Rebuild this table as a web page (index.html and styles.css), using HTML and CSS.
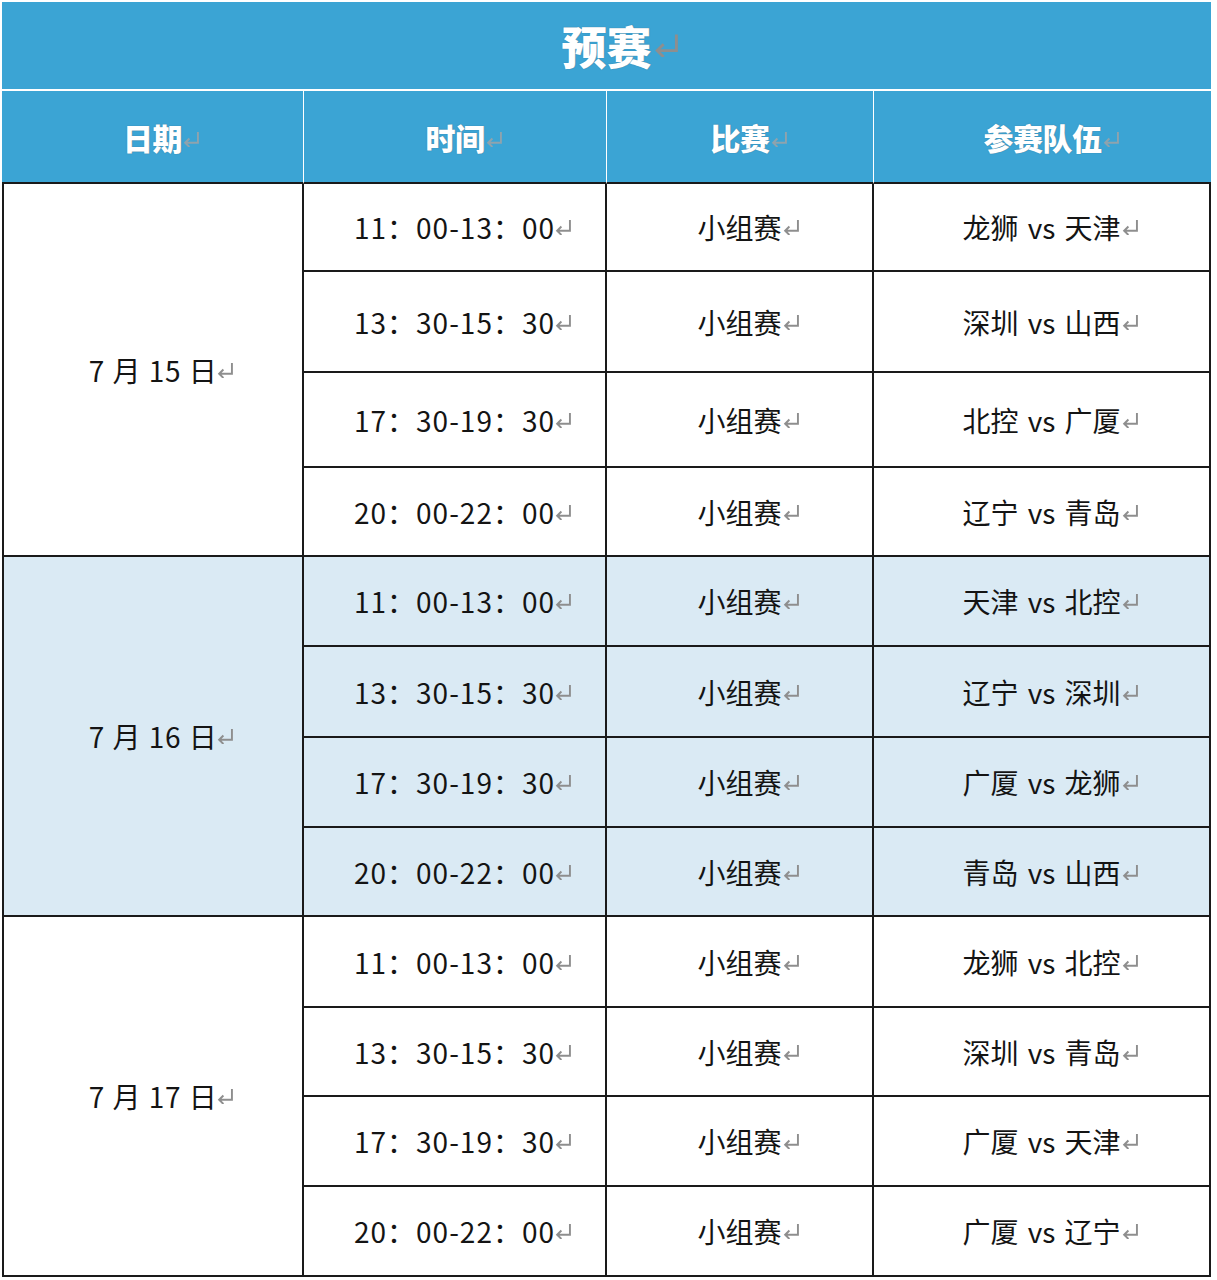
FILE: index.html
```html
<!DOCTYPE html>
<html lang="zh-CN">
<head>
<meta charset="utf-8">
<title>预赛</title>
<link rel="stylesheet" href="styles.css">
</head>
<body>
<table class="sched">
  <colgroup>
    <col class="c1"><col class="c2"><col class="c3"><col class="c4">
  </colgroup>
  <thead>
    <tr class="title-row"><th colspan="4" class="title"><span class="t">预赛<span class="ret"><svg viewBox="0 0 16 15"><path d="M14.5 1V11H2.5M6.5 7L2.5 11L6.5 15"/></svg></span></span></th></tr>
    <tr class="head-row">
      <th><span class="t">日期<span class="ret"><svg viewBox="0 0 16 15"><path d="M14.5 1V11H2.5M6.5 7L2.5 11L6.5 15"/></svg></span></span></th>
      <th><span class="t">时间<span class="ret"><svg viewBox="0 0 16 15"><path d="M14.5 1V11H2.5M6.5 7L2.5 11L6.5 15"/></svg></span></span></th>
      <th><span class="t">比赛<span class="ret"><svg viewBox="0 0 16 15"><path d="M14.5 1V11H2.5M6.5 7L2.5 11L6.5 15"/></svg></span></span></th>
      <th class="last"><span class="t">参赛队伍<span class="ret"><svg viewBox="0 0 16 15"><path d="M14.5 1V11H2.5M6.5 7L2.5 11L6.5 15"/></svg></span></span></th>
    </tr>
  </thead>
  <tbody id="body"></tbody>
</table>
<script src="app.js"></script>
</body>
</html>
```
FILE: styles.css
```css
html, body {
  margin: 0;
  padding: 0;
  background: #ffffff;
}
body {
  font-family: "Noto Sans CJK SC", "Noto Sans", sans-serif;
  color: #141414;
}
.sched {
  margin: 2px 0 0 2px;
  width: 1209px;
  table-layout: fixed;
  border-collapse: separate;
  border-spacing: 0;
}
.c1 { width: 302px; }
.c2 { width: 303px; }
.c3 { width: 267px; }
.c4 { width: 337px; }

th, td {
  padding: 0;
  text-align: center;
  vertical-align: middle;
}
.t {
  position: relative;
  display: inline-block;
}
.ret {
  position: absolute;
  left: 100%;
  top: 50%;
  width: 18px;
  height: 16px;
  margin-top: -8px;
}
.ret svg {
  display: block;
  width: 18px;
  height: 16px;
  fill: none;
  stroke: #8e8e8e;
  stroke-width: 1.8;
}
.title {
  background: #3ba4d4;
  height: 87px;
  border-bottom: 2px solid #ffffff;
  color: #ffffff;
  font-size: 45px;
  font-weight: 900;
  text-shadow: 0 0 1px rgba(60, 80, 100, 0.7);
}
.title .ret {
  width: 26px;
  height: 24px;
  margin-top: -13px;
  left: calc(100% + 1px);
}
.title .ret svg { width: 26px; height: 24px; }
.head-row th {
  background: #3ba4d4;
  height: 91px;
  border-right: 1px solid #ffffff;
  border-bottom: 2px solid #1a1a1a;
  color: #ffffff;
  font-size: 30px;
  font-weight: 900;
  letter-spacing: -0.5px;
  text-shadow: 0 0 1px rgba(60, 80, 100, 0.7);
}
.head-row th.last { border-right: 0; }
.head-row .ret { margin-top: -6px; }
.head-row .ret svg { stroke: #8fa3ad; }

td {
  border-right: 2px solid #1a1a1a;
  border-bottom: 2px solid #1a1a1a;
  font-size: 28px;
  line-height: 1;
}
td.date { border-left: 2px solid #1a1a1a; }
tr.alt td { background: #daeaf4; }
td.time .t { letter-spacing: 1px; }
td.date .t { word-spacing: 1px; letter-spacing: 0.5px; }
td.teams .t { word-spacing: 3px; }
td.time .ret, td.date .ret { margin-left: -1px; }
```
FILE: app.js
```js
var groups = [
  { date: "7 月 15 日", alt: false, games: [
    ["11：00-13：00", "龙狮 vs 天津"],
    ["13：30-15：30", "深圳 vs 山西"],
    ["17：30-19：30", "北控 vs 广厦"],
    ["20：00-22：00", "辽宁 vs 青岛"]
  ]},
  { date: "7 月 16 日", alt: true, games: [
    ["11：00-13：00", "天津 vs 北控"],
    ["13：30-15：30", "辽宁 vs 深圳"],
    ["17：30-19：30", "广厦 vs 龙狮"],
    ["20：00-22：00", "青岛 vs 山西"]
  ]},
  { date: "7 月 17 日", alt: false, games: [
    ["11：00-13：00", "龙狮 vs 北控"],
    ["13：30-15：30", "深圳 vs 青岛"],
    ["17：30-19：30", "广厦 vs 天津"],
    ["20：00-22：00", "广厦 vs 辽宁"]
  ]}
];
var heights = [88, 101, 95, 89, 90, 91, 90, 89, 91, 89, 90, 90];
var RET = '<span class="ret"><svg viewBox="0 0 16 15"><path d="M14.5 1V11H2.5M6.5 7L2.5 11L6.5 15"/></svg></span>';
function cell(text) { return '<span class="t">' + text + RET + '</span>'; }
var html = "";
var idx = 0;
groups.forEach(function (g) {
  g.games.forEach(function (gm, i) {
    var h = heights[idx++];
    html += '<tr' + (g.alt ? ' class="alt"' : '') + ' style="height:' + h + 'px">';
    if (i === 0) html += '<td class="date" rowspan="4">' + cell(g.date) + '</td>';
    html += '<td class="time">' + cell(gm[0]) + '</td>';
    html += '<td class="game">' + cell("小组赛") + '</td>';
    html += '<td class="teams">' + cell(gm[1]) + '</td>';
    html += '</tr>';
  });
});
document.getElementById("body").innerHTML = html;
```
